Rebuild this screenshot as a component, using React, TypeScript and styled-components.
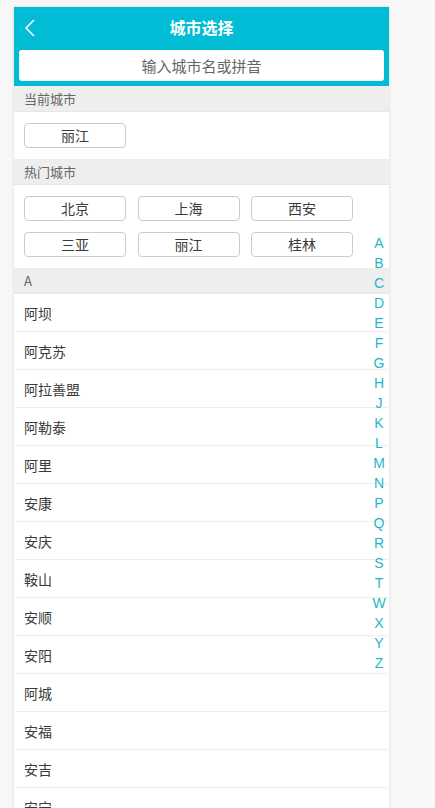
import React from "react";
import styled, { createGlobalStyle } from "styled-components";

const GlobalStyle = createGlobalStyle`
  html, body {
    margin: 0;
    padding: 0;
    background-color: #f7f7f7;
    font-family: "Noto Sans CJK SC", "Liberation Sans", sans-serif;
  }
`;

const Page = styled.div`
  position: relative;
  width: 375px;
  margin: 7px 0 0 14px;
  background-color: #ffffff;
  box-shadow: 0 0 3px rgba(0, 0, 0, 0.12);
  min-height: 801px;
`;

const Header = styled.div`
  background-color: #00bcd4;
  padding: 0 5px 5px;
`;

const TitleBar = styled.div`
  position: relative;
  height: 43px;
  display: flex;
  align-items: center;
  justify-content: center;

  h1 {
    margin: 0 0 3px;
    color: #ffffff;
    font-size: 16px;
    font-weight: 700;
  }
`;

const BackButton = styled.button`
  position: absolute;
  left: 3px;
  top: 11px;
  padding: 0;
  border: none;
  background: none;
  display: flex;
`;

const SearchInput = styled.input`
  display: block;
  box-sizing: border-box;
  width: 100%;
  height: 31px;
  border: none;
  border-radius: 3px;
  outline: none;
  text-align: center;
  font-family: inherit;
  font-size: 15px;
  color: #333;

  &::placeholder {
    color: #666;
  }
`;

const SectionTitle = styled.div`
  height: 26px;
  line-height: 26px;
  padding: 0 10px;
  font-size: 13px;
  color: #666;
  background-color: #eeeeee;
  border-bottom: 1px solid #e6e6e6;
  box-sizing: border-box;
`;

const CityGrid = styled.div`
  display: grid;
  grid-template-columns: repeat(3, 102px);
  column-gap: 11.5px;
  row-gap: 11px;
  padding: 11px 10px;
`;

const CityButton = styled.div`
  height: 25px;
  line-height: 23px;
  box-sizing: border-box;
  border: 1px solid #cccccc;
  border-radius: 4px;
  text-align: center;
  font-size: 14px;
  color: #3a3a3a;
`;

const CityList = styled.ul`
  list-style: none;
  margin: 0 1px 0 2px;
  padding: 0;
`;

const CityItem = styled.li`
  box-sizing: border-box;
  height: 38px;
  line-height: 38px;
  padding-left: 8px;
  border-bottom: 1px solid #eeeeee;
  font-size: 14px;
  color: #3a3a3a;
`;

const IndexBar = styled.ul`
  position: absolute;
  top: 226px;
  right: 0;
  width: 20px;
  margin: 0;
  padding: 0;
  list-style: none;
  font-family: "Liberation Sans", sans-serif;

  li {
    height: 20px;
    line-height: 20px;
    text-align: center;
    font-size: 14px;
    color: #1fb6c9;
  }
`;

const hotCities = ["北京", "上海", "西安", "三亚", "丽江", "桂林"];
const aCities = [
  "阿坝", "阿克苏", "阿拉善盟", "阿勒泰", "阿里", "安康", "安庆",
  "鞍山", "安顺", "安阳", "阿城", "安福", "安吉", "安宁",
];
const letters = "ABCDEFGHJKLMNPQRSTWXYZ".split("");

export default function App() {
  return (
    <>
      <GlobalStyle />
      <Page>
        <Header>
          <TitleBar>
            <BackButton>
              <svg width="16" height="20" viewBox="0 0 16 20">
                <polyline points="12,2 4,10 12,18" fill="none" stroke="#fff" strokeWidth="1.6" />
              </svg>
            </BackButton>
            <h1>城市选择</h1>
          </TitleBar>
          <SearchInput placeholder="输入城市名或拼音" />
        </Header>

        <SectionTitle>当前城市</SectionTitle>
        <CityGrid>
          <CityButton>丽江</CityButton>
        </CityGrid>

        <SectionTitle>热门城市</SectionTitle>
        <CityGrid>
          {hotCities.map((c) => (
            <CityButton key={c}>{c}</CityButton>
          ))}
        </CityGrid>

        <SectionTitle>A</SectionTitle>
        <CityList>
          {aCities.map((c) => (
            <CityItem key={c}>{c}</CityItem>
          ))}
        </CityList>

        <IndexBar>
          {letters.map((l) => (
            <li key={l}>{l}</li>
          ))}
        </IndexBar>
      </Page>
    </>
  );
}
